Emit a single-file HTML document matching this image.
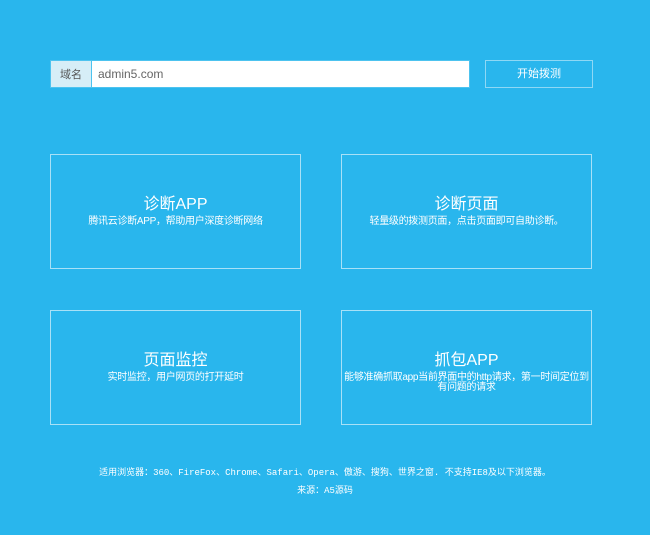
<!DOCTYPE html>
<html><head><meta charset="utf-8"><style>
*{margin:0;padding:0;box-sizing:border-box}
body{width:650px;height:535px;background:#29b6ed;font-family:"Liberation Sans","Noto Sans CJK SC",sans-serif;color:#fff;position:relative;overflow:hidden}
.lab{position:absolute;left:50px;top:60px;width:41px;height:28px;background:#d6eef7;color:#555;font-size:11px;line-height:28px;text-align:center;border:1px solid #4dc3ef;border-right:none}
.inp{position:absolute;left:91px;top:60px;width:379px;height:28px;background:#fff;border:1px solid #4dc3ef;color:#666;font-size:12px;line-height:26px;padding-left:6px}
.btn{position:absolute;left:485px;top:60px;width:108px;height:28px;border:1px solid #8ed8f5;font-size:11px;line-height:26px;text-align:center}
.box{position:absolute;width:251px;height:115px;border:1px solid #a8e1f7;text-align:center}
.box h2{font-weight:normal;font-size:16px;margin-top:40px;line-height:20px}
.box p{font-size:10px;line-height:10px;margin-top:2px;padding:0;letter-spacing:-0.3px}
.ft{position:absolute;left:0;width:650px;text-align:center;font-size:9px;font-family:"Liberation Mono","Noto Sans CJK SC",monospace}
</style></head><body>
<div class="lab">域名</div>
<div class="inp">admin5.com</div>
<div class="btn">开始拨测</div>
<div class="box" style="left:50px;top:154px"><h2>诊断APP</h2><p>腾讯云诊断APP，帮助用户深度诊断网络</p></div>
<div class="box" style="left:341px;top:154px"><h2>诊断页面</h2><p>轻量级的拨测页面，点击页面即可自助诊断。</p></div>
<div class="box" style="left:50px;top:310px"><h2>页面监控</h2><p>实时监控，用户网页的打开延时</p></div>
<div class="box" style="left:341px;top:310px"><h2>抓包APP</h2><p>能够准确抓取app当前界面中的http请求，第一时间定位到<br>有问题的请求</p></div>
<div class="ft" style="top:465px">适用浏览器：360、FireFox、Chrome、Safari、Opera、傲游、搜狗、世界之窗. 不支持IE8及以下浏览器。</div>
<div class="ft" style="top:483px">来源：A5源码</div>
</body></html>
